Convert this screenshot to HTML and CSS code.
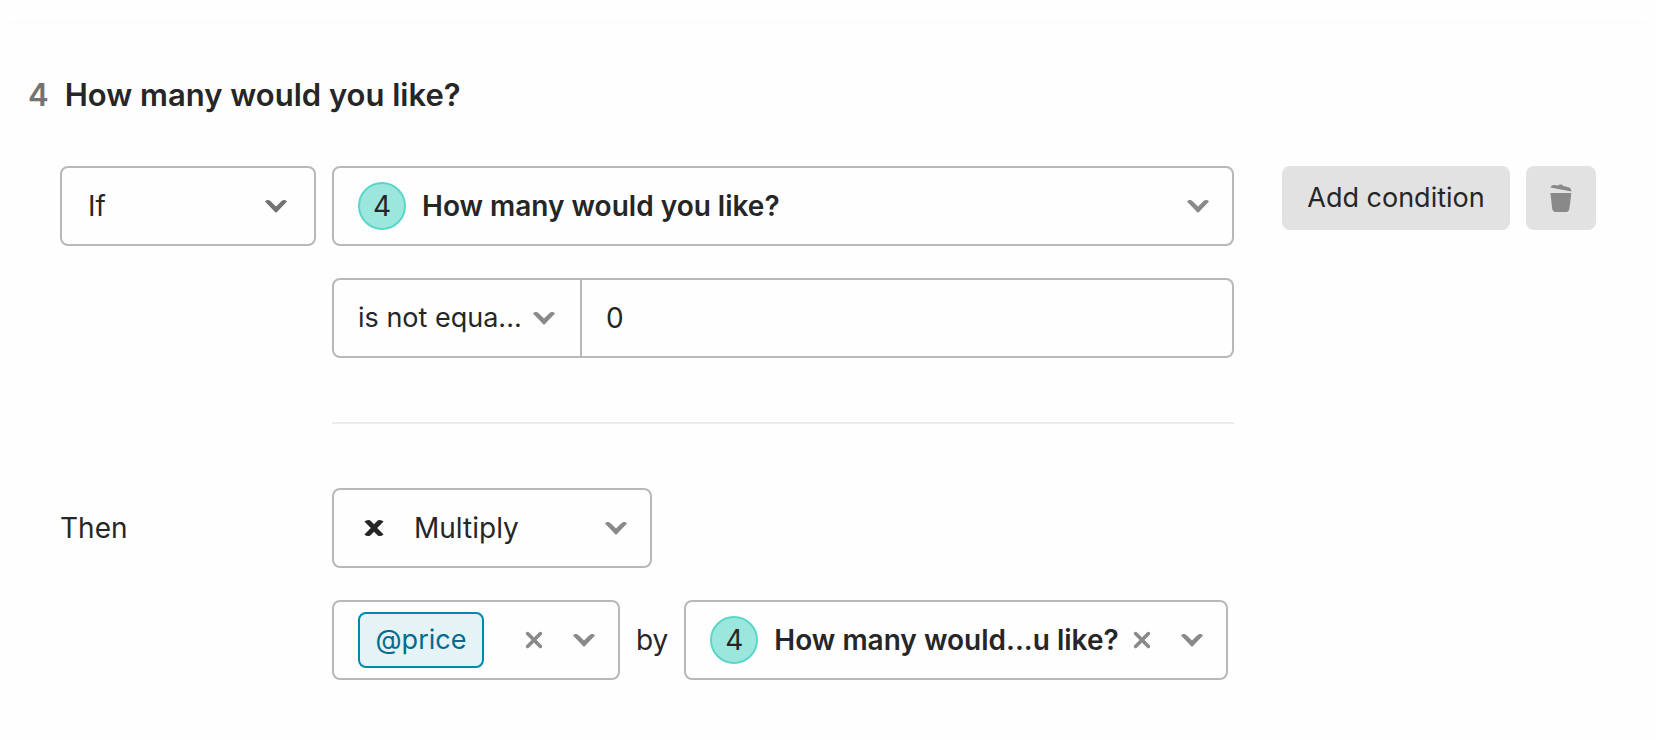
FILE: index.html
```html
<!DOCTYPE html>
<html lang="en">
<head>
  <meta charset="UTF-8">
  <meta name="viewport" content="width=device-width, initial-scale=1">
  <title>Logic</title>
  <link rel="stylesheet" href="styles.css">
</head>
<body>
  <!-- shared icons -->
  <svg class="sprite" aria-hidden="true">
    <symbol id="chevron" viewBox="0 0 24 24">
      <path d="M1 7.4 Q2.2 6 3.8 6 Q5.4 6 6.4 7 L12 12.4 L17.6 7 Q18.6 6 20.2 6 Q21.8 6 23 7.4 L13 18 Q12 19 11 18 Z" fill="currentColor"/>
    </symbol>
    <symbol id="cross" viewBox="0 0 18 18">
      <path d="M2.6 2.6 L15.4 15.4 M15.4 2.6 L2.6 15.4" fill="none" stroke="currentColor" stroke-width="3.6" stroke-linecap="round"/>
    </symbol>
  </svg>

  <main class="card">
    <h2 class="title"><span class="number">4</span> How many would you like?</h2>

    <form class="rule">
      <div class="field joiner">
        <select class="select" aria-label="Condition type">
          <option>If</option>
          <option>Always</option>
        </select>
        <svg class="chevron dark"><use href="#chevron"/></svg>
      </div>

      <div class="condition">
        <div class="field">
          <span class="badge">4</span>
          <select class="select bold" aria-label="Question">
            <option>How many would you like?</option>
          </select>
          <svg class="chevron"><use href="#chevron"/></svg>
        </div>
        <div class="compare">
          <div class="field operator">
            <select class="select" aria-label="Operator">
              <option>is not equa...</option>
              <option>is equal to</option>
            </select>
            <svg class="chevron"><use href="#chevron"/></svg>
          </div>
          <input class="value" type="text" value="0" aria-label="Value">
        </div>
      </div>

      <div class="actions">
        <button class="btn" type="button">Add condition</button>
        <button class="btn icon-btn" type="button" aria-label="Delete">
          <svg class="trash" viewBox="0 0 22 30">
            <path d="M0.5 4.6 C1 2.8 2.6 2 4.6 2.1 L8.4 2.4 C9.2 1 12.6 1 13.4 3 L17.6 4 C20 4.6 21.4 6 21.4 8.4 Z"/>
            <path d="M0.4 10 H21.4 L19.4 25.4 C19 28 17.6 29 15.4 29 H6.6 C4 29 2.6 28 2.2 25.4 Z"/>
          </svg>
        </button>
      </div>

      <hr class="divider">

      <div class="then">Then</div>
      <div class="outcome">
        <div class="field action">
          <svg class="times" viewBox="0 0 20 18">
            <path d="M0.4 2.4 Q3 0.2 6 1.2 L10 5.2 L14 1.2 Q17 0.2 19.6 2.4 L13.2 9 L19.6 15.6 Q17 17.8 14 16.8 L10 12.8 L6 16.8 Q3 17.8 0.4 15.6 L6.8 9 Z" fill="currentColor"/>
          </svg>
          <select class="select" aria-label="Action">
            <option>Multiply</option>
            <option>Add</option>
            <option>Subtract</option>
          </select>
          <svg class="chevron"><use href="#chevron"/></svg>
        </div>
        <div class="operands">
          <div class="field variable">
            <select class="chip" aria-label="Variable">
              <option>@price</option>
            </select>
            <button class="clear" type="button" aria-label="Clear variable"><svg><use href="#cross"/></svg></button>
            <svg class="chevron"><use href="#chevron"/></svg>
          </div>
          <span class="by">by</span>
          <div class="field factor">
            <span class="badge">4</span>
            <select class="select bold" aria-label="Multiply by">
              <option>How many would...u like?</option>
            </select>
            <button class="clear" type="button" aria-label="Clear value"><svg><use href="#cross"/></svg></button>
            <svg class="chevron"><use href="#chevron"/></svg>
          </div>
        </div>
      </div>
    </form>
  </main>
</body>
</html>
```
FILE: styles.css
```css
* {
  box-sizing: border-box;
}

body {
  margin: 0;
  padding-top: 21px;
  background: #fefefe;
  color: #262627;
  font-family: Inter, sans-serif;
  font-size: 28px;
  line-height: 40px;
}

.sprite {
  display: none;
}

.card {
  padding: 52px 60px 60px 28px;
  border-top: 2px solid #fcfcfc;
  border-radius: 16px 16px 0 0;
}

.title {
  display: flex;
  gap: 16px;
  margin: 0 0 51px;
  font-size: 31px;
  font-weight: 600;
}

.number {
  color: #737373;
}

.rule {
  display: grid;
  grid-template-columns: 256px 1fr auto;
  column-gap: 16px;
  padding-left: 32px;
}

.condition,
.outcome {
  display: flex;
  flex-direction: column;
  gap: 32px;
}

.field {
  display: flex;
  align-items: center;
  height: 80px;
  padding: 0 22px 0 24px;
  border: 2px solid #b8b8b8;
  border-radius: 8px;
}

.joiner {
  padding: 0 26px;
}

.select,
.value,
.chip {
  appearance: none;
  border: 0;
  padding: 0;
  background: none;
  color: inherit;
  font: inherit;
  outline: none;
}

.select {
  flex: 1;
  min-width: 0;
}

.select.bold {
  font-weight: 600;
}

.chevron {
  flex: none;
  width: 24px;
  height: 24px;
  color: #898989;
  pointer-events: none;
}

.dark {
  color: #737373;
}

.badge {
  flex: none;
  width: 48px;
  height: 48px;
  margin-right: 16px;
  border: 2px solid #5bd6c8;
  border-radius: 50%;
  background: #9be7de;
  line-height: 44px;
  text-align: center;
}

.compare {
  display: flex;
}

.operator {
  width: 250px;
  padding: 0 24px;
  border-radius: 8px 0 0 8px;
  font-size: 27px;
}

.value {
  flex: 1;
  min-width: 0;
  height: 80px;
  padding: 0 24px;
  border: 2px solid #b8b8b8;
  border-left: 0;
  border-radius: 0 8px 8px 0;
}

.actions {
  display: flex;
  gap: 16px;
  align-items: flex-start;
  margin-left: 32px;
}

.btn {
  width: 228px;
  height: 64px;
  padding: 0;
  border: 0;
  border-radius: 8px;
  background: #e2e2e2;
  color: inherit;
  font: inherit;
  font-size: 27px;
}

.icon-btn {
  display: flex;
  align-items: center;
  justify-content: center;
  width: 70px;
}

.trash {
  width: 22px;
  height: 30px;
  fill: #898989;
}

.divider {
  grid-column: 2;
  width: 100%;
  height: 2px;
  margin: 64px 0;
  border: 0;
  background: #ebebeb;
}

.then {
  grid-column: 1;
  line-height: 80px;
}

.action {
  width: 320px;
}

.times {
  flex: none;
  width: 20px;
  height: 18px;
  margin: 0 30px 0 6px;
}

.operands {
  display: flex;
  align-items: center;
  gap: 16px;
}

.variable {
  width: 288px;
}

.factor {
  width: 544px;
}

.chip {
  width: 126px;
  height: 56px;
  margin-right: auto;
  border: 2px solid #0487af;
  border-radius: 8px;
  background: #e5f2f6;
  color: #036b8b;
  font-size: 27px;
  text-align: center;
}

.clear {
  display: flex;
  flex: none;
  margin-right: 29px;
  padding: 0;
  border: 0;
  background: none;
  color: #898989;
}

.clear svg {
  width: 18px;
  height: 18px;
}
```
